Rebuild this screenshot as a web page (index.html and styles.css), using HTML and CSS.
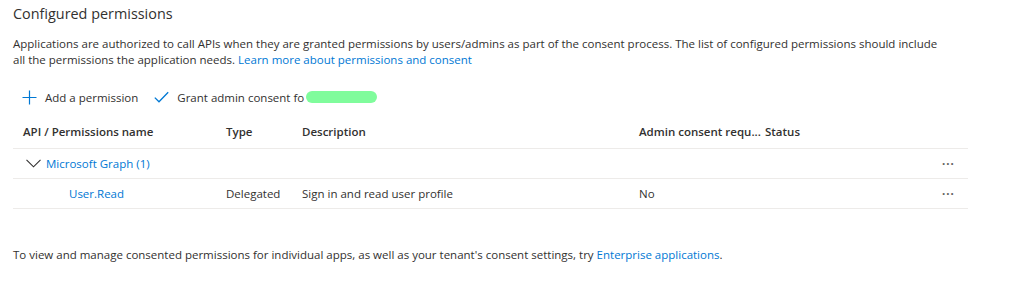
FILE: index.html
```html
<!DOCTYPE html>
<html lang="en">

<head>
    <meta charset="UTF-8">
    <meta name="viewport" content="width=device-width, initial-scale=1.0">
    <link rel="stylesheet" href="styles.css">
    <title>Configured permissions</title>
</head>

<body>
    <section class="permissions">
        <h2 class="title">Configured permissions</h2>
        <p class="intro">
            Applications are authorized to call APIs when they are granted permissions by users/admins as part of the consent process. The list of configured permissions should include
            all the permissions the application needs. <a href="#">Learn more about permissions and consent</a>
        </p>

        <div class="toolbar">
            <button class="tool">
                <svg width="15" height="15" viewBox="0 0 15 15"><path d="M7.5 0.5v14M0.5 7.5h14" stroke="#0078d4" stroke-width="1.2" fill="none"/></svg>
                Add a permission
            </button>
            <button class="tool">
                <svg width="15" height="15" viewBox="0 0 15 15"><path d="M0.8 7.6l4.2 4.2 9.2-9.6" stroke="#0078d4" stroke-width="1.3" fill="none"/></svg>
                <span>Grant admin consent fo<span class="tenant"></span></span>
            </button>
        </div>

        <div class="grid">
            <div class="row head">
                <div class="cell name">API / Permissions name</div>
                <div class="cell type">Type</div>
                <div class="cell desc">Description</div>
                <div class="cell admin">Admin consent requ...</div>
                <div class="cell status">Status</div>
                <div class="cell more"></div>
            </div>
            <div class="row group">
                <div class="cell name">
                    <svg width="15" height="9" viewBox="0 0 15 9"><path d="M0.5 0.8l7 7 7-7" stroke="#323130" stroke-width="1.1" fill="none"/></svg>
                    <a href="#">Microsoft Graph (1)</a>
                </div>
                <div class="cell type"></div>
                <div class="cell desc"></div>
                <div class="cell admin"></div>
                <div class="cell status"></div>
                <div class="cell more">&middot;&middot;&middot;</div>
            </div>
            <div class="row">
                <div class="cell name child"><a href="#">User.Read</a></div>
                <div class="cell type">Delegated</div>
                <div class="cell desc">Sign in and read user profile</div>
                <div class="cell admin">No</div>
                <div class="cell status"></div>
                <div class="cell more">&middot;&middot;&middot;</div>
            </div>
        </div>

        <p class="note">
            To view and manage consented permissions for individual apps, as well as your tenant's consent settings, try <a href="#">Enterprise applications</a>.
        </p>
    </section>
</body>

</html>
```

FILE: styles.css
```css
body {
    margin: 0;
    padding: 0;
    background: #fff;
    color: #323130;
    font-family: 'Open Sans', 'Noto Sans', sans-serif;
    font-size: 11.5px;
}

a {
    color: #0078d4;
    text-decoration: none;
}

.permissions {
    padding: 4px 13px 0 13px;
}

.title {
    margin: 0;
    font-size: 14.4px;
    font-weight: 400;
    line-height: 20px;
}

.intro {
    margin: 12px 0 0 0;
    line-height: 16px;
    width: 930px;
}

.toolbar {
    display: flex;
    gap: 16px;
    margin-top: 17px;
    padding-left: 9px;
    height: 24px;
    align-items: center;
}

.tool {
    display: flex;
    align-items: center;
    gap: 8px;
    padding: 0;
    border: none;
    background: none;
    font: inherit;
    color: #323130;
}

.tenant {
    display: inline-block;
    vertical-align: middle;
    width: 71px;
    height: 12px;
    margin: -2px 0 0 2px;
    border-radius: 6px;
    background: #80fc9c;
}

.grid {
    margin-top: 5px;
    width: 955px;
}

.row {
    display: flex;
    align-items: center;
    box-sizing: border-box;
    height: 30px;
    border-bottom: 1px solid #edebe9;
}

.row.head {
    font-weight: 600;
    height: 35px;
}

.cell {
    padding-left: 10px;
    white-space: nowrap;
}

.name {
    width: 193px;
    display: flex;
    align-items: center;
    gap: 5px;
}

.group .name {
    padding-left: 13px;
}

.name.child {
    padding-left: 56px;
    width: 147px;
}

.type {
    width: 66px;
}

.desc {
    width: 327px;
}

.admin {
    width: 118px;
}

.status {
    flex: 1;
    padding-left: 8px;
}

.more {
    width: 26px;
    color: #605e5c;
    font-weight: 700;
    letter-spacing: 1px;
}

.note {
    margin: 38px 0 0 0;
    line-height: 16px;
}
```
